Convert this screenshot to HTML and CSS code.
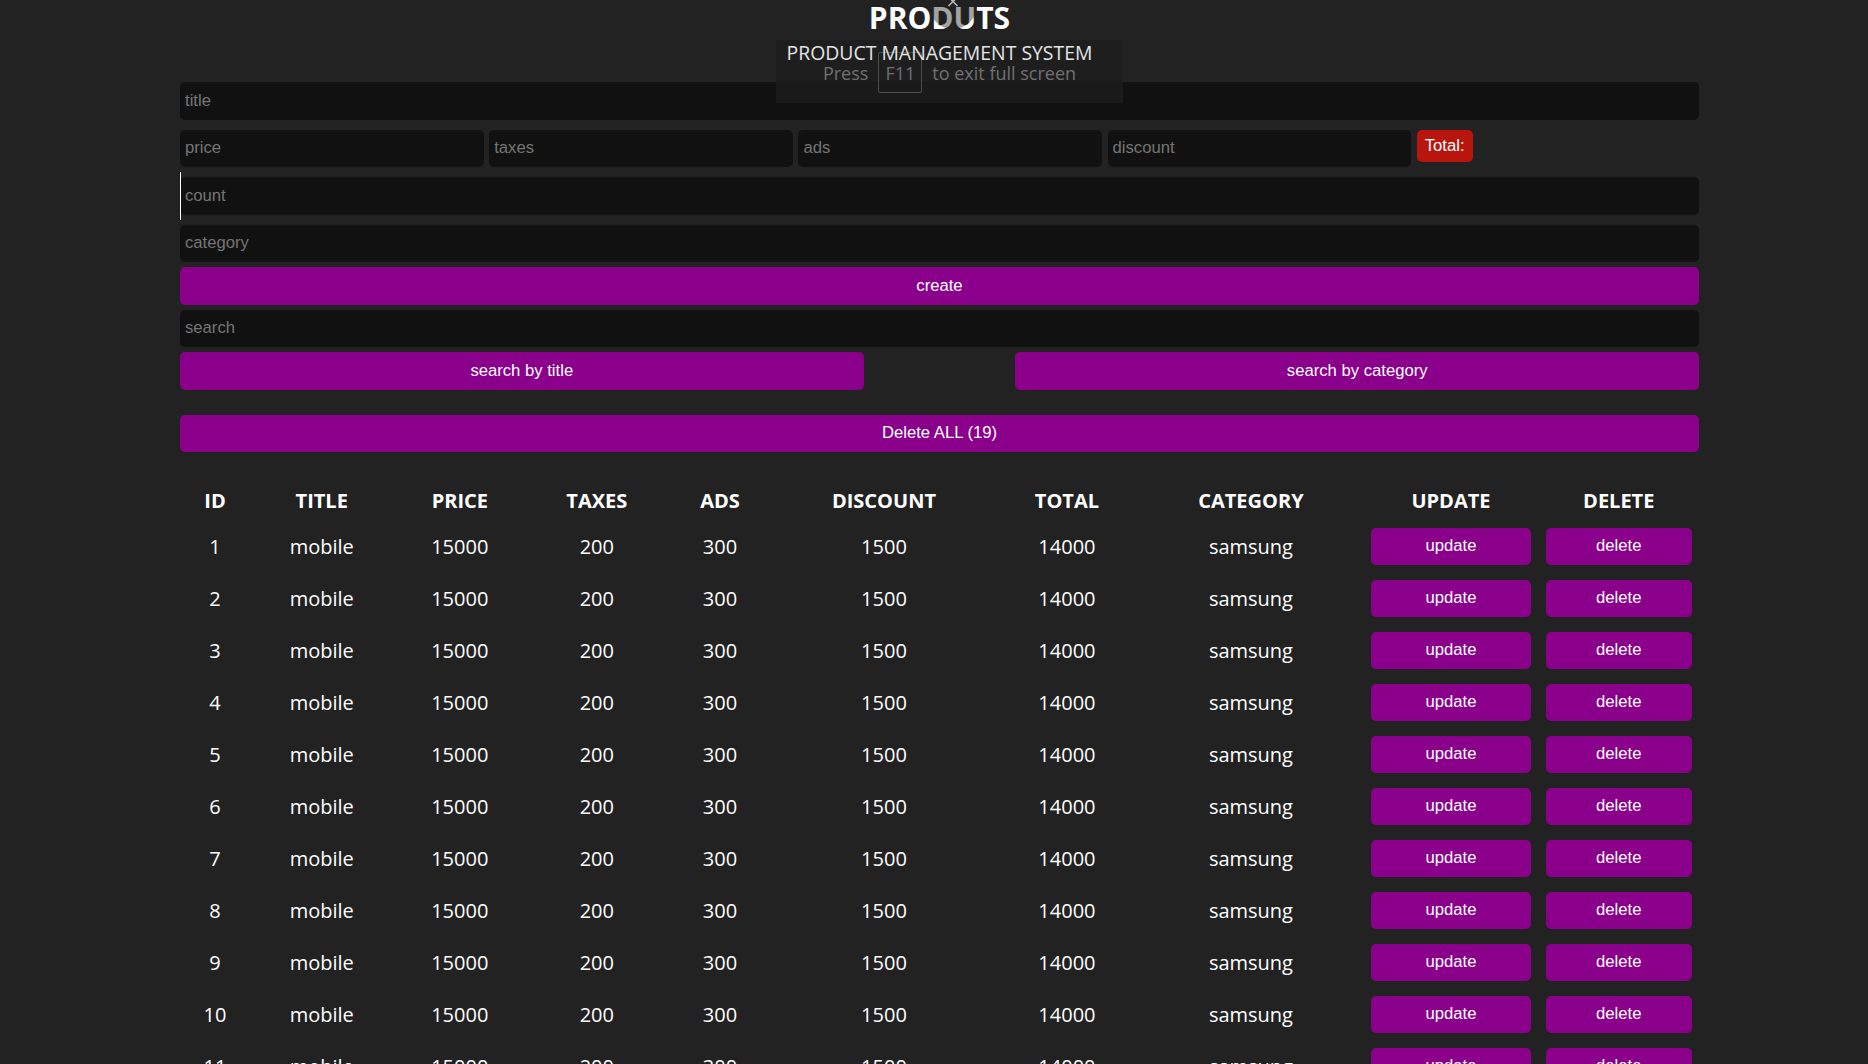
FILE: index.html
```html
<!DOCTYPE html>
<html lang="en">
<head>
<meta charset="utf-8">
<title>CRUD</title>
<link rel="stylesheet" href="styles.css">
</head>
<body>
<div class="page">
  <header class="head">
    <h2 class="brand">PRODUTS</h2>
    <p class="subtitle">PRODUCT MANAGEMENT SYSTEM</p>
  </header>

  <div class="form">
    <input class="field" type="text" placeholder="title">
    <div class="price-row">
      <input class="field price-field" type="number" placeholder="price">
      <input class="field price-field" type="number" placeholder="taxes">
      <input class="field price-field" type="number" placeholder="ads">
      <input class="field price-field" type="number" placeholder="discount">
      <small class="total">Total:</small>
    </div>
    <div class="count-wrap">
      <input class="field" type="number" placeholder="count">
    </div>
    <input class="field gap10" type="text" placeholder="category">
    <button class="btn gap5">create</button>
    <input class="field gap5" type="text" placeholder="search">
    <div class="search-row">
      <button class="btn search-btn">search by title</button>
      <button class="btn search-btn">search by category</button>
    </div>
    <button class="btn delete-all">Delete ALL (19)</button>
  </div>

  <table class="products">
    <colgroup>
      <col style="width:70px">
      <col style="width:143.4px">
      <col style="width:132.8px">
      <col style="width:141.2px">
      <col style="width:105.2px">
      <col style="width:222.8px">
      <col style="width:143.2px">
      <col style="width:224.8px">
      <col style="width:175.2px">
      <col style="width:160.4px">
    </colgroup>
    <thead>
      <tr>
        <th>ID</th><th>TITLE</th><th>PRICE</th><th>TAXES</th><th>ADS</th><th>DISCOUNT</th><th>TOTAL</th><th>CATEGORY</th><th>UPDATE</th><th>DELETE</th>
      </tr>
    </thead>
    <tbody id="tbody">
    </tbody>
  </table>
</div>

<div class="fs-hint">
  <span>Press</span><span class="key">F11</span><span>to exit full screen</span>
</div>
<div class="fs-close">
  <svg width="12" height="9" viewBox="0 0 12 9"><path d="M1.5 -3 L10.5 6 M10.5 -3 L1.5 6" stroke="#b5b5b5" stroke-width="1.6" fill="none"/></svg>
</div>

<script src="app.js"></script>
</body>
</html>
```

FILE: app.js
```js
var rows = '';
for (var i = 1; i <= 19; i++) {
  rows += '<tr><td>' + i + '</td><td>mobile</td><td>15000</td><td>200</td><td>300</td><td>1500</td><td>14000</td><td>samsung</td>' +
    '<td><button class="btn row-btn update">update</button></td>' +
    '<td><button class="btn row-btn delete">delete</button></td></tr>';
}
document.getElementById('tbody').innerHTML = rows;
```

FILE: styles.css
```css
* { box-sizing: border-box; }

body {
  margin: 0;
  background: #222222;
  color: #ffffff;
  font-family: "Open Sans", "Noto Sans", sans-serif;
}

.page {
  width: 1519px;
  margin-left: 180px;
}

.head {
  text-align: center;
  position: relative;
  z-index: 2;
}

.brand {
  margin: 0;
  font-size: 30px;
  line-height: 36px;
  font-weight: 700;
  color: #ffffff;
}

.subtitle {
  margin: 5px 0 0;
  font-size: 19.4px;
  line-height: 24px;
  color: #e4e4e4;
}

.form {
  display: flex;
  flex-direction: column;
  margin-top: 17px;
}

.field {
  display: block;
  width: 100%;
  height: 37.5px;
  border: none;
  outline: none;
  border-radius: 5px;
  background: #111111;
  color: #ffffff;
  padding: 0 5px;
  font-family: "Liberation Sans", Arial, sans-serif;
  font-size: 16.67px;
}

.field::placeholder { color: #757575; }

.field::-webkit-outer-spin-button,
.field::-webkit-inner-spin-button { -webkit-appearance: none; margin: 0; }

.price-row {
  display: flex;
  align-items: flex-start;
  gap: 5.4px;
  margin-top: 10px;
}

.price-field { width: 20%; flex: none; }

.total {
  display: flex;
  align-items: center;
  height: 32px;
  padding: 0 8px;
  border-radius: 5px;
  background: #b8150d;
  color: #ffffff;
  font-family: "Liberation Sans", Arial, sans-serif;
  font-size: 16.67px;
}

.count-wrap {
  position: relative;
  margin-top: 10px;
}

.count-wrap::before {
  content: "";
  position: absolute;
  left: 0;
  top: -5px;
  bottom: -5px;
  width: 1px;
  background: #ffffff;
}

.gap10 { margin-top: 10px; }
.gap5 { margin-top: 5px; }

.btn {
  display: block;
  width: 100%;
  height: 37.5px;
  border: none;
  border-radius: 5px;
  background: #8b008b;
  color: #ffffff;
  font-family: "Liberation Sans", Arial, sans-serif;
  font-size: 16.67px;
  cursor: pointer;
}

.search-row {
  display: flex;
  justify-content: space-between;
  margin-top: 5px;
}

.search-btn { width: 45%; }

.delete-all { margin-top: 25px; }

.products {
  width: 1519px;
  margin-top: 28px;
  table-layout: fixed;
  border-collapse: collapse;
}

.products th {
  height: 40px;
  padding: 0;
  font-size: 20px;
  font-weight: 700;
  text-align: center;
}

.products td {
  height: 52px;
  padding: 0;
  font-size: 20px;
  text-align: center;
}

.row-btn {
  height: 37px;
  margin: 0 auto;
}

.row-btn.update { width: 160px; }
.row-btn.delete { width: 146px; }

/* browser full-screen hint overlay */
.fs-hint {
  position: absolute;
  left: 776px;
  top: 40px;
  width: 347px;
  height: 63px;
  background: rgba(30, 30, 31, 0.77);
  z-index: 1;
  display: flex;
  align-items: center;
  justify-content: center;
  gap: 10px;
  padding-top: 2px;
  color: #707070;
  font-size: 18px;
}

.fs-hint .key {
  display: inline-flex;
  align-items: center;
  justify-content: center;
  width: 44px;
  height: 41px;
  border: 1px solid #4e4e4e;
  border-radius: 2px;
}

.fs-close {
  position: absolute;
  left: 929px;
  top: -19px;
  width: 48px;
  height: 48px;
  border-radius: 50%;
  background: rgba(34, 34, 34, 0.42);
  z-index: 3;
  display: flex;
  justify-content: center;
  padding-top: 19px;
}

.fs-close svg { display: block; }
```
